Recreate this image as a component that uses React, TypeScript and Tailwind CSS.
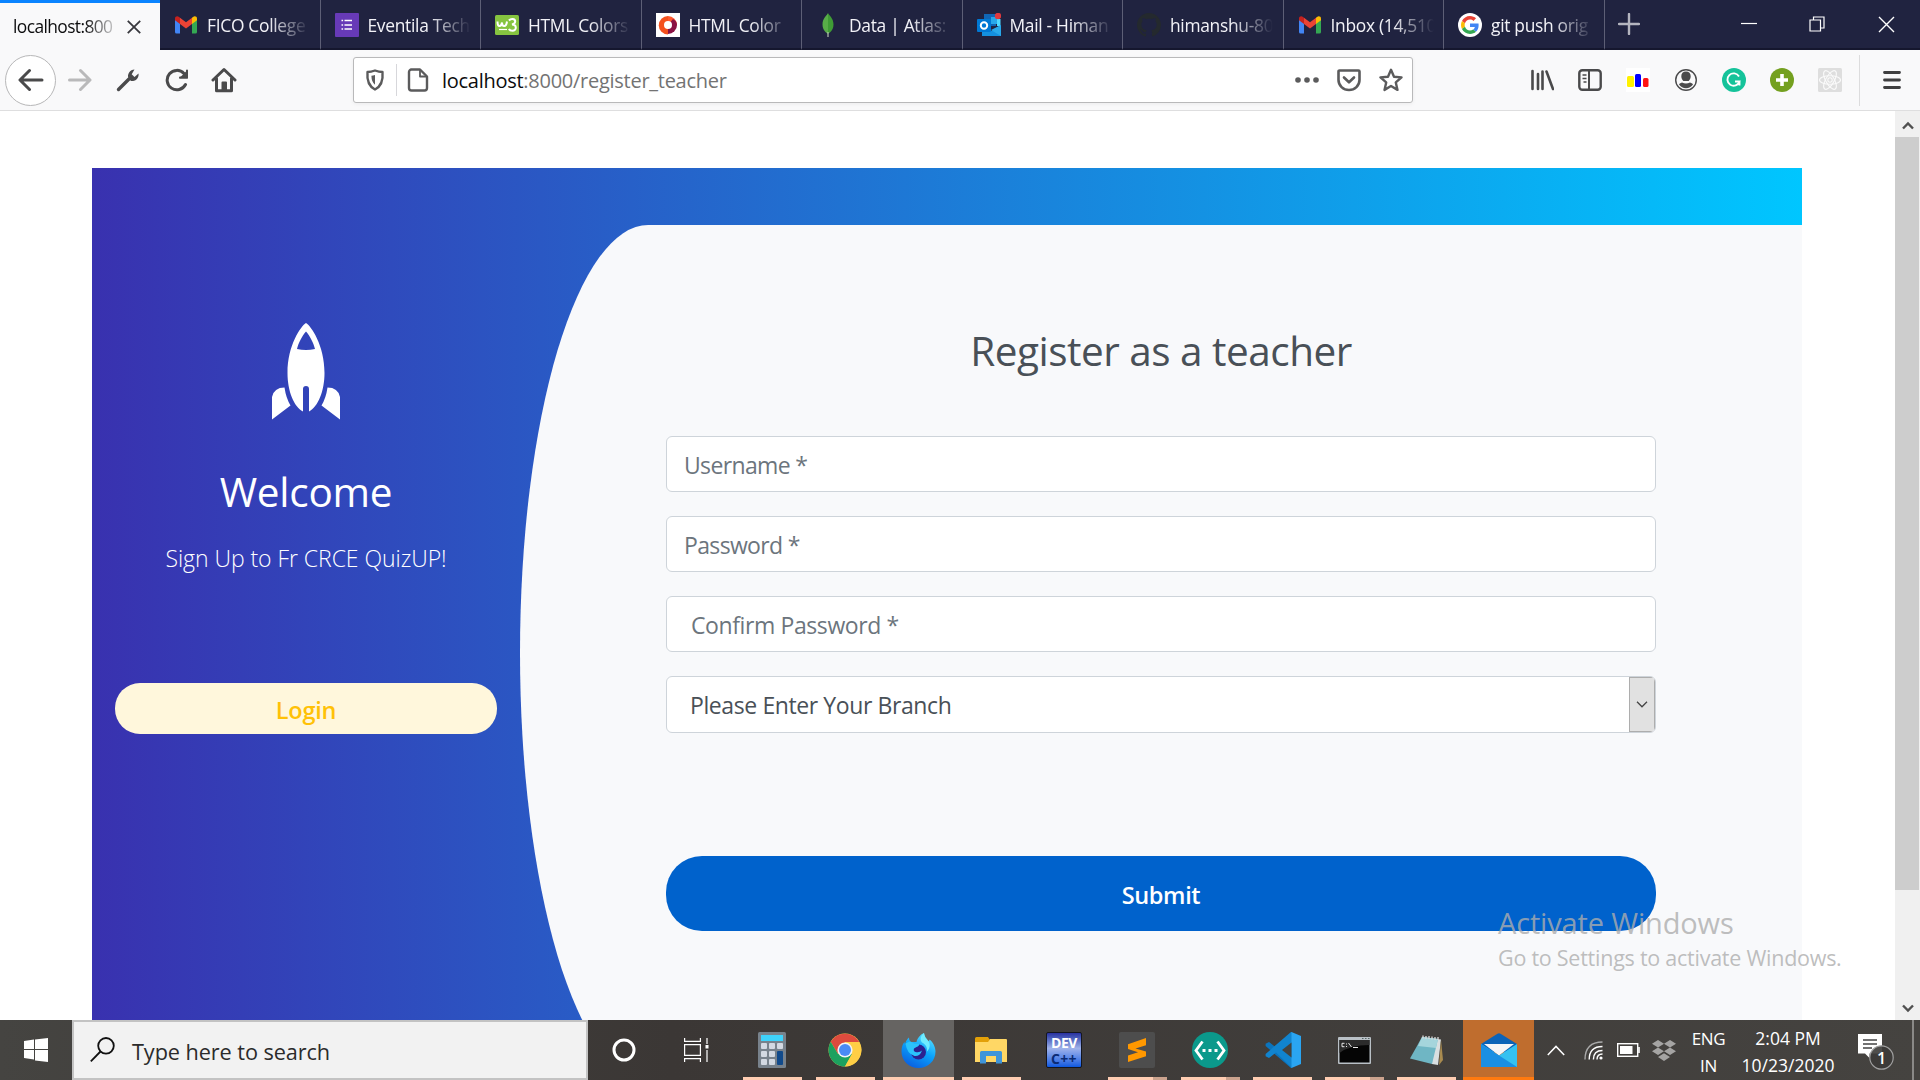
import type { ReactNode } from "react";

const UI_FONT = "font-['Open_Sans','Noto_Sans',sans-serif]";

/* ---------- tab favicons ---------- */

const Gmail = () => (
  <svg className="h-6 w-6" viewBox="0 0 24 24">
    <path d="M1 6v13a1.5 1.5 0 0 0 1.5 1.5H6V10z" fill="#4285f4" />
    <path d="M23 6v13a1.5 1.5 0 0 1-1.5 1.5H18V10z" fill="#34a853" />
    <path d="M18 4.8V11l5-3.8V5.5c0-2.2-2.4-3-4-1.600z" fill="#fbbc04" />
    <path d="M6 4.800V11L1 7.200V5.500c0-2.200 2.400-3 4-1.600z" fill="#c5221f" />
    <path d="M6 11V4.700l6 4.600 6-4.600V11l-6 4.600z" fill="#ea4335" />
  </svg>
);

const FormsIcon = () => (
  <svg className="h-6 w-6" viewBox="0 0 24 24">
    <rect width="24" height="24" rx="1" fill="#673ab7" />
    <path d="M9.500 7.500h7.500M9.500 12h7.500M9.500 16h7.500" stroke="#fff" strokeWidth="1.500" />
    <path d="M6.500 7.500h1.600M6.500 12h1.600M6.500 16h1.600" stroke="#fff" strokeWidth="1.600" />
  </svg>
);

const W3Icon = () => (
  <svg className="h-6 w-6" viewBox="0 0 24 24">
    <rect y="2" width="24" height="20" rx="1.500" fill="#86c440" />
    <path d="M2.500 8.500q0 4.500 2 4.500T7 9.500q0 3.500 2.200 3.500t2.800-4.500" stroke="#fff" strokeWidth="2" fill="none" />
    <path d="M14 7.500q1.500-1.700 3.500-1.500 2.800.3 2.700 2.500T17 11.500c5 0 5 6.300.4 6.300q-2.600 0-3.400-2" stroke="#fff" strokeWidth="2" fill="none" />
    <path d="M4 16.500h8" stroke="#fff" strokeWidth="1.200" />
  </svg>
);

const CodesIcon = () => (
  <svg className="h-6 w-6" viewBox="0 0 24 24">
    <rect width="24" height="24" fill="#fff" />
    <path d="M12 3a9 9 0 1 0 0 18.500z" fill="#f4511e" />
    <path d="M12 3a9 9 0 0 1 9 9l-9 0z" fill="#ff5a30" />
    <path d="M21 12a9 9 0 0 1-9 9V12l5-6q4 2 4 6z" fill="#8a1244" />
    <circle cx="12" cy="12" r="4" fill="#fff" />
  </svg>
);

const MongoIcon = () => (
  <svg className="h-6 w-6" viewBox="0 0 24 24">
    <path d="M12 0c1 2.500 5.500 5 5.500 11.500S13 20 12 21z" fill="#3f9c35" />
    <path d="M12 0c-1 2.500-5.500 5-5.500 11.500S11 20 12 21z" fill="#58ad48" />
    <path d="M12 19v5" stroke="#b8c4b2" strokeWidth="1.200" />
  </svg>
);

const OutlookIcon = () => (
  <svg className="h-6 w-6" viewBox="0 0 24 24">
    <path d="M7 1h12v12H7z" fill="#1066b5" />
    <path d="M14 4h6v7h-6z" fill="#28a8ea" />
    <path d="M20 6h3.500v7H20z" fill="#50d9ff" />
    <path d="M5 12l9.500 6L24 12v11H5z" fill="#1490df" />
    <path d="M24 12v11L14 17z" fill="#28a8ea" />
    <rect y="6" width="14" height="13" rx="1" fill="#0078d4" />
    <circle cx="7" cy="12.500" r="3.200" fill="none" stroke="#fff" strokeWidth="2" />
    <circle cx="21" cy="3" r="3.200" fill="#e0393e" />
  </svg>
);

const GithubIcon = () => (
  <svg className="h-6 w-6" viewBox="0 0 16 16" fill="#24292e">
    <path d="M8 0C3.580 0 0 3.580 0 8c0 3.540 2.290 6.530 5.470 7.590.4.070.55-.17.55-.38 0-.19-.01-.82-.01-1.490-2.010.37-2.530-.49-2.690-.94-.09-.23-.48-.94-.82-1.130-.28-.15-.68-.52-.01-.53.63-.01 1.080.58 1.230.82.72 1.210 1.870.87 2.330.66.07-.52.28-.87.51-1.070-1.780-.2-3.640-.89-3.640-3.950 0-.87.31-1.590.82-2.150-.08-.2-.36-1.020.08-2.120 0 0 .67-.21 2.200.82.64-.18 1.320-.27 2-.27s1.360.09 2 .27c1.530-1.040 2.200-.82 2.200-.82.44 1.100.16 1.920.08 2.120.51.56.82 1.270.82 2.150 0 3.070-1.870 3.750-3.650 3.950.29.25.54.73.54 1.480 0 1.070-.01 1.930-.01 2.200 0 .21.15.46.55.38A8 8 0 0 0 16 8c0-4.420-3.580-8-8-8z" />
  </svg>
);

const GoogleIcon = () => (
  <svg className="h-6 w-6" viewBox="0 0 24 24">
    <circle cx="12" cy="12" r="12" fill="#fff" />
    <g transform="translate(3 3) scale(.375)">
      <path fill="#ea4335" d="M24 9.500c3.540 0 6.710 1.220 9.210 3.600l6.850-6.850C35.900 2.380 30.470 0 24 0 14.620 0 6.510 5.380 2.560 13.220l7.980 6.190C12.430 13.720 17.740 9.500 24 9.500z" />
      <path fill="#4285f4" d="M46.980 24.550c0-1.570-.15-3.090-.38-4.550H24v9.020h12.940c-.58 2.960-2.260 5.480-4.780 7.180l7.730 6c4.510-4.180 7.090-10.360 7.090-17.650z" />
      <path fill="#fbbc05" d="M10.530 28.590c-.48-1.450-.76-2.990-.76-4.590s.27-3.140.76-4.590l-7.980-6.190C.92 16.460 0 20.120 0 24s.92 7.540 2.560 10.780z" />
      <path fill="#34a853" d="M24 48c6.480 0 11.930-2.130 15.890-5.810l-7.730-6c-2.150 1.450-4.920 2.300-8.160 2.300-6.260 0-11.570-4.220-13.470-9.910l-7.980 6.190C6.510 42.620 14.620 48 24 48z" />
    </g>
  </svg>
);

const tabs: { title: string; icon: ReactNode }[] = [
  { title: "FICO College", icon: <Gmail /> },
  { title: "Eventila Tech", icon: <FormsIcon /> },
  { title: "HTML Colors", icon: <W3Icon /> },
  { title: "HTML Color", icon: <CodesIcon /> },
  { title: "Data | Atlas:", icon: <MongoIcon /> },
  { title: "Mail - Himan", icon: <OutlookIcon /> },
  { title: "himanshu-80", icon: <GithubIcon /> },
  { title: "Inbox (14,510", icon: <Gmail /> },
  { title: "git push orig", icon: <GoogleIcon /> },
];

function TabBar() {
  return (
    <div className="flex h-[50px] shrink-0 bg-[#202340] text-[17.4px] tracking-[-0.3px]">
      <div className="flex w-[160px] items-center border-t-[3px] border-[#0a84ff] bg-[#f9f9fa] pl-[13px] text-[#0c0c0d]">
        <div className="w-[106px] overflow-hidden whitespace-nowrap tracking-[-0.6px] [mask-image:linear-gradient(to_right,#000_68%,transparent_102%)]">
          localhost:800
        </div>
        <svg className="ml-[7px] h-[16px] w-[16px]" viewBox="0 0 18 18" stroke="#38383d" strokeWidth="2">
          <path d="M2 2l14 14M16 2L2 16" />
        </svg>
      </div>
      {tabs.map((t, i) => (
        <div
          key={i}
          className="flex w-[160.500px] items-center gap-[9px] border-r border-b-2 border-r-[#5d5f76] border-b-[#15172e] pl-[14px] text-[#f2f2f7]"
        >
          <div className="shrink-0 pt-[2px]">{t.icon}</div>
          <div className="w-[103px] overflow-hidden whitespace-nowrap pt-[2px] [mask-image:linear-gradient(to_right,#000_60%,transparent_100%)]">
            {t.title}
          </div>
        </div>
      ))}
      <div className="flex flex-1 items-center border-b-2 border-[#15172e] pl-[13px]">
        <svg className="h-[22px] w-[22px]" viewBox="0 0 22 22" stroke="#b4b5bf" strokeWidth="2.400" strokeLinecap="round">
          <path d="M11 1v20M1 11h20" />
        </svg>
        <svg className="ml-[101px] h-4 w-4" viewBox="0 0 16 16" stroke="#fff" strokeWidth="1.200">
          <path d="M0 7.500h16" />
        </svg>
        <svg className="ml-[52px] h-4 w-4" viewBox="0 0 16 16" fill="none" stroke="#fff" strokeWidth="1.200">
          <path d="M1 4h10.500v11H1zM4.500 4V1H15v11h-3.500" />
        </svg>
        <svg className="ml-[53px] h-[17px] w-[17px]" viewBox="0 0 17 17" stroke="#fff" strokeWidth="1.400">
          <path d="M1 1l15 15M16 1L1 16" />
        </svg>
      </div>
    </div>
  );
}

/* ---------- toolbar ---------- */

function NavButtons() {
  return (
    <div className="flex w-[353px] items-center pl-[5px]">
      <div className="flex h-[51px] w-[51px] items-center justify-center rounded-full border border-[#b7b7b8] bg-white">
        <svg className="h-6 w-[26px]" viewBox="0 0 26 24" fill="none" stroke="#4a4a4b" strokeWidth="3" strokeLinecap="round" strokeLinejoin="round">
          <path d="M24 12H2.500M11.500 2.500L2 12l9.500 9.500" />
        </svg>
      </div>
      <svg className="ml-3 h-6 w-6" viewBox="0 0 24 24" fill="none" stroke="#b9b9ba" strokeWidth="3" strokeLinecap="round" strokeLinejoin="round">
        <path d="M1.500 12h20M12.500 2.500L22 12l-9.500 9.500" />
      </svg>
      <svg className="ml-6 h-6 w-6" viewBox="0 0 24 24">
        <path d="M2.500 21.500L13 11" stroke="#4a4a4b" strokeWidth="3.400" strokeLinecap="round" />
        <path d="M18.500 1.500a6.500 6.500 0 0 0-6 9l2.500 2.500a6.500 6.500 0 0 0 7.500-7.500l-4 3.500-2.800-2.800z" fill="#4a4a4b" />
      </svg>
      <svg className="ml-[25px] h-6 w-6" viewBox="0 0 24 24" fill="none" stroke="#4a4a4b" strokeWidth="3" strokeLinecap="round">
        <path d="M20.500 16.500A9.700 9.700 0 1 1 19 5.500" />
        <path d="M22.500 2v8.500H14z" fill="#4a4a4b" stroke="none" />
        <path d="M22 2.500v7h-7" strokeWidth="2" />
      </svg>
      <svg className="ml-[22px] h-[26px] w-[26px]" viewBox="0 0 26 26" fill="none" stroke="#4a4a4b" strokeWidth="3" strokeLinecap="round" strokeLinejoin="round">
        <path d="M2 13L13 2.500 24 13" />
        <path d="M5.500 11.500v12.300h15V11.500" />
        <path d="M11.500 23v-7.500h3.500V23z" strokeWidth="2" fill="#4a4a4b" />
      </svg>
    </div>
  );
}

function UrlBar() {
  return (
    <div className="flex h-[46px] w-[1060px] items-center rounded-[3px] border border-[#b9b9ba] bg-white shadow-[0_1px_4px_rgba(0,0,0,0.06)]">
      <svg className="ml-[11px] h-[22px] w-[20px]" viewBox="0 0 20 22" fill="none" stroke="#5b5b5c" strokeWidth="2.400" strokeLinejoin="round">
        <path d="M10 1.500q4 1.500 7.500 1.500 1.200 13-7.500 17.500Q1.300 16 2.500 3 6 3 10 1.500z" />
        <path d="M10 6q-2 .8-3.600.8.100 6.200 3.600 9z" fill="#5b5b5c" stroke="none" />
      </svg>
      <div className="ml-[11px] h-8 w-px bg-[#d7d7db]" />
      <svg className="ml-[10px] h-6 w-[22px]" viewBox="0 0 22 24" fill="none" stroke="#5b5b5c" strokeWidth="2.400" strokeLinejoin="round">
        <path d="M4 1.500h9l7 7V20a2.500 2.500 0 0 1-2.500 2.500h-13A2.500 2.500 0 0 1 2 20V4a2.500 2.500 0 0 1 2.500-2.500z" />
        <path d="M13 2v6.500h6.500" strokeWidth="1.800" />
      </svg>
      <div className="ml-[13px] flex-1 pt-px text-[20px] tracking-[-0.27px] text-[#737373]">
        <span className="text-[#0c0c0d]">localhost</span>:8000/register_teacher
      </div>
      <div className="flex items-center gap-[18px] pr-[9px]">
        <svg className="h-6 w-6" viewBox="0 0 24 24" fill="#5b5b5c">
          <circle cx="3" cy="12" r="2.800" />
          <circle cx="12" cy="12" r="2.800" />
          <circle cx="21" cy="12" r="2.800" />
        </svg>
        <svg className="h-6 w-6" viewBox="0 0 24 24" fill="none" stroke="#5b5b5c" strokeWidth="2.600" strokeLinecap="round" strokeLinejoin="round">
          <path d="M2.500 2.500h19a1 1 0 0 1 1 1V12a10.500 10 0 0 1-21 0V3.500a1 1 0 0 1 1-1z" />
          <path d="M7 9.500l5 4.800 5-4.800" />
        </svg>
        <svg className="h-6 w-6" viewBox="0 0 24 24" fill="none" stroke="#5b5b5c" strokeWidth="2.400" strokeLinejoin="round">
          <path d="M12 1.800l3 6.900 7.500.7-5.700 5 1.700 7.500-6.500-3.900-6.500 3.900 1.700-7.500-5.700-5 7.500-.7z" />
        </svg>
      </div>
    </div>
  );
}

function ToolbarIcons() {
  return (
    <div className="flex flex-1 items-center justify-end">
      <div className="flex items-center gap-6 pr-[17px]">
        <svg className="h-6 w-6" viewBox="0 0 24 24" stroke="#4a4a4b" strokeWidth="2.600" strokeLinecap="round">
          <path d="M2.500 3v18M8 6v15M12.500 3.500v17.500M16.500 3.500L23 21" />
        </svg>
        <svg className="h-6 w-6" viewBox="0 0 24 24" fill="none" stroke="#4a4a4b" strokeWidth="2.400">
          <rect x="1.300" y="2.300" width="21.400" height="19.400" rx="3" />
          <path d="M11 2v20" strokeWidth="2" />
          <path d="M4.500 7h4M4.500 10.500h4M5.500 14h3" strokeWidth="1.500" />
        </svg>
        <svg className="h-6 w-6" viewBox="0 0 24 24">
          <rect width="24" height="24" fill="#fff" />
          <rect x="1" y="8" width="7" height="11" rx="1.500" fill="#fff100" />
          <rect x="9" y="6" width="6" height="13" rx="1.500" fill="#0000ff" />
          <rect x="17" y="10" width="5.500" height="9" rx="1.500" fill="#ff1414" />
        </svg>
        <svg className="h-6 w-6" viewBox="0 0 24 24">
          <circle cx="12" cy="12" r="10.300" fill="none" stroke="#4a4a4b" strokeWidth="1.400" />
          <path d="M12 3.500c3 0 4.700 2 4.700 4.800 0 2-1 3.600-2 4.700l-5.400 0c-1-1.100-2-2.700-2-4.700 0-2.800 1.700-4.800 4.700-4.800z" fill="#4a4a4b" />
          <path d="M8 14.500q4 2 8 0 3 .8 3 2a8.500 8.500 0 0 1-14 0q0-1.200 3-2z" fill="#4a4a4b" />
        </svg>
        <svg className="h-6 w-6" viewBox="0 0 24 24">
          <circle cx="12" cy="12" r="12" fill="#15c39a" />
          <path d="M17 8.500A6.200 6.200 0 1 0 17.500 13.500h-4.500M17.500 13v4.500" fill="none" stroke="#fff" strokeWidth="1.900" />
        </svg>
        <svg className="h-6 w-6" viewBox="0 0 24 24">
          <circle cx="12" cy="12" r="12" fill="#74a01f" />
          <path d="M12 6v12M6 12h12" stroke="#fff" strokeWidth="3.600" />
        </svg>
        <svg className="h-6 w-6" viewBox="0 0 24 24" fill="none" stroke="#fafafa" strokeWidth="1.100">
          <rect width="24" height="24" rx="1.500" fill="#dedede" stroke="none" />
          <ellipse cx="12" cy="12" rx="10.500" ry="4.200" />
          <ellipse cx="12" cy="12" rx="10.500" ry="4.200" transform="rotate(60 12 12)" />
          <ellipse cx="12" cy="12" rx="10.500" ry="4.200" transform="rotate(120 12 12)" />
          <circle cx="12" cy="12" r="2.200" />
        </svg>
      </div>
      <div className="h-[51px] w-px bg-[#dcdcdd]" />
      <svg className="mr-[19px] ml-[23px] h-5 w-[18px]" viewBox="0 0 18 20" stroke="#3f3f40" strokeWidth="2.800" strokeLinecap="round">
        <path d="M1.500 2.500h15M1.500 10h15M1.500 17.500h15" />
      </svg>
    </div>
  );
}

/* ---------- page ---------- */

function RegisterPage() {
  return (
    <div className="flex min-h-0 flex-1 bg-white">
      <main className="w-[1895px] overflow-hidden pt-[57px] pl-[92px]">
        <div className="flex h-[913px] w-[1710px] bg-linear-to-r/srgb from-[#3931af] to-[#00c6ff]">
          <section className="flex w-[428px] flex-col items-center pt-[155px] text-white">
            <svg className="h-[97px] w-[68px]" viewBox="0 0 68 97" fill="#fff">
              <path
                fillRule="evenodd"
                d="M34 0C39 3 52.500 22 52.500 50 52.500 68 46 84 37 88.500V66a3 3 0 0 0-6 0v22.500C22 84 15.500 68 15.500 50 15.500 22 29 3 34 0zM34 8.500C30 13 26.500 20 25 26q9 2 18 0C41.500 20 38 13 34 8.500z"
              />
              <path d="M12.500 64.500Q14 75 18.500 82.500L0 96.500V74Q2 64.500 12.500 64.500z" />
              <path d="M55.500 64.500Q54 75 49.500 82.500L68 96.500V74Q66 64.500 55.500 64.500z" />
            </svg>
            <h3 className="mt-[47px] text-[40.500px] leading-[50px] tracking-[-0.25px]">Welcome</h3>
            <p className="mt-[23px] text-[23px] leading-9 font-light tracking-[-0.05px]">Sign Up to Fr CRCE QuizUP!</p>
            <button className="mt-[107px] h-[51px] w-[382px] rounded-[25px] bg-[#fff7dc] pt-[3px] text-[23.500px] leading-9 font-semibold tracking-[-0.2px] text-[#ffc107]">
              Login
            </button>
          </section>
          <section className="mt-[57px] h-[856px] w-[1282px] rounded-l-[10%_50%] bg-[#f8f9fb] pt-[101px] pl-[146px]">
            <div className="flex w-[990px] flex-col">
              <h3 className="text-center text-[40.500px] leading-[50px] tracking-[-0.5px] text-[#495057]">
                Register as a teacher
              </h3>
              <div className="mt-[60px] flex flex-col gap-6 text-[23px] leading-9 tracking-[-0.4px] text-[#6c757d]">
                <div className="flex h-14 items-center rounded-[6px] border border-[#ced4da] bg-white pt-[2px] pl-[17px] tracking-[-0.65px]">
                  Username *
                </div>
                <div className="flex h-14 items-center rounded-[6px] border border-[#ced4da] bg-white pt-[2px] pl-[17px] tracking-[-0.65px]">
                  Password *
                </div>
                <div className="flex h-14 items-center rounded-[6px] border border-[#ced4da] bg-white pt-[2px] pl-[24px]">
                  Confirm Password *
                </div>
                <div className="flex h-[57px] items-stretch justify-between overflow-hidden rounded-[6px] border border-[#ced4da] bg-white pl-[23px] text-[#495057]">
                  <span className="self-center pt-px">Please Enter Your Branch</span>
                  <div className="flex w-[26px] items-center justify-center border border-[#adadad] bg-[#e1e1e1]">
                    <svg className="h-[7px] w-3" viewBox="0 0 12 7" fill="none" stroke="#444" strokeWidth="1.300">
                      <path d="M1 .8l5 5 5-5" />
                    </svg>
                  </div>
                </div>
              </div>
              <button className="mt-[123px] h-[75px] rounded-[36px] bg-[#0062cc] pt-[3px] text-[23.500px] leading-9 font-semibold tracking-[-0.35px] text-white">
                Submit
              </button>
            </div>
          </section>
        </div>
      </main>
      <div className="flex w-[25px] flex-col bg-[#f0f0f0]">
        <div className="flex h-[26px] items-center justify-center pt-[3px]">
          <svg className="h-[9px] w-3" viewBox="0 0 12 9" fill="none" stroke="#505050" strokeWidth="2.400">
            <path d="M1 7.500l5-5 5 5" />
          </svg>
        </div>
        <div className="h-[753px] w-6 bg-[#cdcdcd]" />
        <div className="flex flex-1 items-end justify-center pb-[7px]">
          <svg className="h-[9px] w-3" viewBox="0 0 12 9" fill="none" stroke="#505050" strokeWidth="2.400">
            <path d="M1 1.500l5 5 5-5" />
          </svg>
        </div>
      </div>
    </div>
  );
}

/* ---------- taskbar ---------- */

const Calculator = () => (
  <svg className="h-9 w-7" viewBox="0 0 28 36">
    <rect width="28" height="36" rx="1.500" fill="#78828c" />
    <rect x="3" y="3" width="22" height="6" fill="#3fd3fb" />
    <g fill="#d3d9e2">
      <rect x="3" y="11" width="6" height="6" rx="1" />
      <rect x="11" y="11" width="6" height="6" rx="1" />
      <rect x="19" y="11" width="6" height="6" rx="1" />
      <rect x="3" y="19" width="6" height="6" rx="1" />
      <rect x="11" y="19" width="6" height="6" rx="1" />
      <rect x="3" y="27" width="6" height="6" rx="1" />
      <rect x="11" y="27" width="6" height="6" rx="1" />
    </g>
    <rect x="19" y="19" width="6" height="14" rx="1" fill="#114a8b" />
  </svg>
);

const Chrome = () => (
  <svg className="h-[34px] w-[34px]" viewBox="0 0 34 34">
    <circle cx="17" cy="17" r="16.500" fill="#fdd04a" />
    <path d="M2.700 8.800A16.500 16.500 0 0 1 31.300 9H17l-7 12z" fill="#dd4b3e" />
    <path d="M2.700 8.800A16.500 16.500 0 0 0 17 33.500L24 21 17 17 10 21z" fill="#1ca15f" />
    <path d="M31.300 9A16.500 16.500 0 0 1 17 33.500L24 21 17 9z" fill="#ffce45" />
    <circle cx="17" cy="17" r="7.600" fill="#f3f3f3" />
    <circle cx="17" cy="17" r="6" fill="#4a8af5" />
  </svg>
);

const Firefox = () => (
  <svg className="h-[35px] w-[35px]" viewBox="0 0 35 35">
    <defs>
      <linearGradient id="ff-body" x1="0.800" y1="0" x2="0.300" y2="1">
        <stop offset="0" stopColor="#5fe6ff" />
        <stop offset="0.500" stopColor="#0aa2fb" />
        <stop offset="1" stopColor="#0a5fe0" />
      </linearGradient>
    </defs>
    <path
      d="M23 0c-.5 4 2 6 4 8.500 1-.5 1.500-1.500 1.500-2C32 9 34.500 14 34.500 18.500 34.500 28 27 35 17.500 35S.5 27.500.5 18.500c0-4 1-7.500 3-9.500l.500 2.500C5 7 6.500 6 8 4.500 8 7 9 8.500 10.500 9h5C16 6 19 1.500 23 0z"
      fill="url(#ff-body)"
    />
    <circle cx="17.500" cy="19" r="7.500" fill="#2b2190" />
    <path d="M4.500 10.500q5-3.500 8.500 0l5 .5q.5 2-2.500 3l-2.500 1.500q-1 2.500 1.500 3.500 4 1 6.500-1.500-2 6-7.500 5.500Q6 21 4.500 10.500z" fill="#2bc3fc" />
    <path d="M23 0c-4 3-4 7-2 9.500 4 2 5.500 5 5 9 4-4 3-9 1-11Q23.500 4 23 0z" fill="#6fecff" />
  </svg>
);

const Explorer = () => (
  <svg className="h-[27px] w-8" viewBox="0 0 32 27">
    <path d="M0 1.500A1.500 1.500 0 0 1 1.500 0H13l2 3-2 3H0z" fill="#e3a008" />
    <path d="M0 5h13l2-3h16a1 1 0 0 1 1 1v22H0z" fill="#ffd765" />
    <path d="M5 26.500V15.500A1.500 1.500 0 0 1 6.500 14h19a1.500 1.500 0 0 1 1.500 1.500v11h-6V19H11v7.500z" fill="#3f95da" />
  </svg>
);

const DevCpp = () => (
  <div className="grid h-9 w-9 grid-rows-2 justify-items-center rounded-[2px] border border-[#14161f] bg-linear-to-b from-[#2a30a0] via-[#9fb2ea] via-45% to-[#0a59e0] font-bold">
    <span className="text-[14px] leading-[20px] tracking-[-0.4px] text-white">DEV</span>
    <span className="text-[14px] leading-[17px] tracking-[0.3px] text-[#0b2b75]">C++</span>
  </div>
);

const Sublime = () => (
  <svg className="h-9 w-9" viewBox="0 0 36 36">
    <rect width="36" height="36" rx="2" fill="#4d4d4d" />
    <path d="M9 12.200L27 6v7.200l-10.500 3.300L27 19.500v4.800L9 30v-6.500l10-3.300L9 17z" fill="#ff9800" />
  </svg>
);

const Brackets = () => (
  <svg className="h-9 w-9" viewBox="0 0 36 36">
    <circle cx="18" cy="18" r="18" fill="#0b998b" />
    <path d="M10.500 9.500L4 18.500l6.500 9M25.500 9.500l6.500 9-6.500 9" fill="none" stroke="#fff" strokeWidth="2.800" />
    <path d="M10.500 18.500h3M16.500 18.500h3M22.500 18.500h3" stroke="#fff" strokeWidth="3" />
  </svg>
);

const VsCode = () => (
  <svg className="h-9 w-9" viewBox="0 0 36 36">
    <path d="M27 0L11 15.500 4 10 .6 11.700v2.400L26 36h1z" fill="#0b74bd" />
    <path d="M27 36L11 20.500 4 26 .6 24.300v-2.400L26 0h1z" fill="#1184cf" />
    <path d="M26.500 0L36 4v28l-9.500 4z" fill="#2aa5f2" />
    <path d="M26.500 10.500v15L17 18z" fill="#44433f" />
  </svg>
);

const Cmd = () => (
  <svg className="h-[27px] w-[33px]" viewBox="0 0 33 27">
    <rect width="33" height="27" rx="1" fill="#b9c0c6" />
    <rect x="1.500" y="3" width="30" height="22.500" fill="#050505" />
    <path d="M1.500 3h30v5Q12 8 1.500 16z" fill="#2b2b2b" />
    <path d="M24 1.500h1.500M27 1.500h1.500M30 1.500h1.500" stroke="#566" strokeWidth="1.200" />
    <path d="M6.500 6.300H4v3.400h2.500M8.500 6.500v1M8.500 9v1M10.500 6l3 4M15 10.500h5" stroke="#e6e6e6" strokeWidth="1" fill="none" />
  </svg>
);

const Notepad = () => (
  <svg className="h-8 w-[33px]" viewBox="0 0 33 32">
    <path d="M12 3L31 5.500 28 31 22 30z" fill="#d9dfe0" />
    <path d="M31 6l2 20-4 5z" fill="#a98b4f" />
    <path d="M12 3l16 2-6 25L0 24.500z" fill="#6fb6c4" />
    <path d="M12 3l16 2-2 9-18-2z" fill="#a5d5dc" />
    <path d="M13 1.500v3M16 2v3M19 2v3M22 2.500v3M25 3v3M28 3v3" stroke="#dcdcdc" strokeWidth="1.300" />
  </svg>
);

const Mail = () => (
  <svg className="h-[34px] w-9" viewBox="0 0 36 34">
    <path d="M0 11L16.500.7q1.500-.9 3 0L36 11v8H0z" fill="#0b63b8" />
    <path d="M3 11h30L18 22.500z" fill="#f5f5f7" />
    <path d="M0 11l18 11.500L36 11v23H0z" fill="#35c1f1" />
    <path d="M0 11l36 23H0z" fill="#1a8fe3" />
  </svg>
);

type TaskbarApp = { name: string; icon: ReactNode; state: "idle" | "open" | "multi" | "active" | "alert" };

const apps: TaskbarApp[] = [
  { name: "calculator", icon: <Calculator />, state: "open" },
  { name: "chrome", icon: <Chrome />, state: "open" },
  { name: "firefox", icon: <Firefox />, state: "active" },
  { name: "explorer", icon: <Explorer />, state: "open" },
  { name: "devcpp", icon: <DevCpp />, state: "idle" },
  { name: "sublime", icon: <Sublime />, state: "multi" },
  { name: "brackets", icon: <Brackets />, state: "multi" },
  { name: "vscode", icon: <VsCode />, state: "open" },
  { name: "cmd", icon: <Cmd />, state: "multi" },
  { name: "notepad", icon: <Notepad />, state: "open" },
  { name: "mail", icon: <Mail />, state: "alert" },
];

const cellStyle = {
  idle: "",
  open: "",
  multi: "",
  active: "bg-[#666462]",
  alert: "bg-[#bf6d2e]",
};

function AppCell({ app, wide }: { app: TaskbarApp; wide: boolean }) {
  return (
    <div className={wide ? "flex w-[73px] justify-center" : "flex w-[72px] justify-center"}>
      <div className={`flex h-full w-[71px] flex-col items-center ${cellStyle[app.state]}`}>
        <div className="flex flex-1 items-center pt-[3px]">{app.icon}</div>
        {app.state === "open" && <div className="h-[3px] w-[59px] bg-[#ffcdb2]" />}
        {app.state === "idle" && <div className="h-[3px]" />}
        {app.state === "active" && <div className="h-[3px] w-full bg-[#ffcdb2]" />}
        {app.state === "alert" && <div className="h-[3px] w-full bg-[#ff7a0f]" />}
        {app.state === "multi" && (
          <div className="flex h-[3px] w-[59px]">
            <div className="flex-1 bg-[#ffcdb2]" />
            <div className="w-[14px] bg-[#cba38e]" />
          </div>
        )}
      </div>
    </div>
  );
}

function Taskbar() {
  return (
    <div className="flex h-[60px] shrink-0 bg-linear-to-r from-[#454441] via-[#3b3735] via-35% to-[#454340] text-white">
      <div className="flex w-[72px] items-center justify-center">
        <svg className="h-6 w-6" viewBox="0 0 24 24" fill="#fff">
          <path d="M0 3l10-1.400V11H0zM11 1.500L24 0v11H11zM0 12h10v9.400L0 20zM11 12h13v12l-13-1.600z" />
        </svg>
      </div>
      <div className="flex w-[516px] items-center border-2 border-[#c3c3c3] bg-[#f2f2f2] text-[#2b2b2b]">
        <svg className="mb-[2px] ml-4 h-[25px] w-[25px]" viewBox="0 0 25 25" fill="none" stroke="#111" strokeWidth="1.800">
          <circle cx="16" cy="8.800" r="7.800" />
          <path d="M10.500 14.500L.8 24.300" />
        </svg>
        <span className="ml-[17px] pt-[4px] text-[21.700px] tracking-[-0.08px]">Type here to search</span>
      </div>
      <div className="flex w-[72px] items-center justify-center">
        <svg className="h-6 w-6" viewBox="0 0 24 24" fill="none" stroke="#fff" strokeWidth="3">
          <circle cx="12" cy="12" r="10" />
        </svg>
      </div>
      <div className="flex w-[75.500px] items-center pl-6">
        <svg className="h-6 w-[25px]" viewBox="0 0 25 24" fill="none" stroke="#fff" strokeWidth="1.200">
          <path d="M.6 0v3.400h15.800V0M.6 6.600h15.800v10.800H.6zM.6 24v-3.400h15.800V24M23 0v6M23 12v12" />
          <path d="M21.500 7h3v3.500h-3z" fill="#fff" stroke="none" />
        </svg>
      </div>
      {apps.map((a, i) => (
        <AppCell key={a.name} app={a} wide={i < 7} />
      ))}
      <div className="flex flex-1 items-center">
        <svg className="ml-[12px] h-[11px] w-[18px]" viewBox="0 0 18 11" fill="none" stroke="#fff" strokeWidth="1.500">
          <path d="M.8 10L9 1.400l8.200 8.600" />
        </svg>
        <svg className="ml-[19px] h-[19px] w-[19px]" viewBox="0 0 19 19" fill="none" stroke="#fff" strokeWidth="1.400">
          <path d="M1 18.500Q1 1 18.500 1" stroke="#aaa" />
          <path d="M5.200 18.500Q5.200 5.500 18.500 5.500M9.400 18.500q0-9 9.100-9M13 18.500q0-5.500 5.500-5.500" />
          <circle cx="17" cy="17" r="1.600" fill="#fff" stroke="none" />
        </svg>
        <svg className="ml-[14px] h-[14px] w-[23px]" viewBox="0 0 23 14">
          <rect x=".7" y=".7" width="20" height="12.600" fill="none" stroke="#fff" strokeWidth="1.400" />
          <rect x="3" y="3" width="12.500" height="8" fill="#fff" />
          <path d="M22 4v6" stroke="#fff" strokeWidth="1.600" />
        </svg>
        <svg className="ml-[12px] h-[21px] w-6" viewBox="0 0 24 21" fill="#a5a4a3">
          <path d="M6 0l6 3.700-6 3.700-6-3.700zM18 0l6 3.700-6 3.700-6-3.700zM6 7.600l6 3.700L6 15l-6-3.700zM18 7.600l6 3.700-6 3.700-6-3.700zM12 13.300l6 3.700-6 4-6-4z" />
        </svg>
        <div className="ml-[9px] flex w-[48px] flex-col items-center pt-[3px] text-[17px] leading-[27px] tracking-[-0.3px]">
          <span>ENG</span>
          <span>IN</span>
        </div>
        <div className="ml-[4px] flex w-[103px] flex-col items-center pt-[3px] text-[17.500px] leading-[27px]">
          <span>2:04 PM</span>
          <span>10/23/2020</span>
        </div>
        <svg className="mb-[-3px] ml-[18px] h-9 w-9" viewBox="0 0 36 36">
          <path d="M0 0h24v19.500H11.500V24L7 19.500H0z" fill="#fff" />
          <path d="M5 6h14M5 10h14M5 14h9" stroke="#444" strokeWidth="1.300" />
          <circle cx="23.500" cy="23.500" r="11.700" fill="#3c3b39" fillOpacity=".9" stroke="#a0a0a0" strokeWidth="1.200" />
          <text x="23.500" y="29.500" textAnchor="middle" fontSize="16" fontWeight="600" fill="#fff">
            1
          </text>
        </svg>
      </div>
      <div className="mr-[6px] w-[2px] bg-[#8a8987]" />
    </div>
  );
}

export default function App() {
  return (
    <div className={`relative flex h-[1080px] w-[1920px] flex-col overflow-hidden bg-white ${UI_FONT}`}>
      <TabBar />
      <div className="flex h-[61px] shrink-0 items-center border-b border-[#dededf] bg-[#f9f9fa]">
        <NavButtons />
        <UrlBar />
        <ToolbarIcons />
      </div>
      <RegisterPage />
      <Taskbar />
      <div className="pointer-events-none absolute top-[904px] left-[1498px] whitespace-nowrap text-[#adadad]/80">
        <div className="text-[29px] leading-[38px] tracking-[-0.15px]">Activate Windows</div>
        <div className="text-[21.500px] leading-8 tracking-[-0.25px]">Go to Settings to activate Windows.</div>
      </div>
    </div>
  );
}
